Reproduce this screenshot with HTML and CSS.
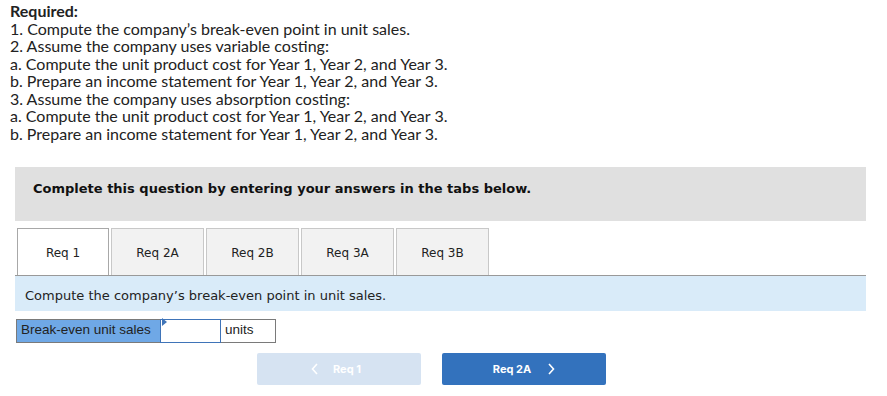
FILE: index.html
```html
<!DOCTYPE html>
<html>
<head>
<meta charset="utf-8">
<link rel="stylesheet" href="styles.css">
</head>
<body>
<div class="required">
  <div class="req-title">Required:</div>
  <div>1. Compute the company’s break-even point in unit sales.</div>
  <div>2. Assume the company uses variable costing:</div>
  <div>a. Compute the unit product cost for Year 1, Year 2, and Year 3.</div>
  <div>b. Prepare an income statement for Year 1, Year 2, and Year 3.</div>
  <div>3. Assume the company uses absorption costing:</div>
  <div>a. Compute the unit product cost for Year 1, Year 2, and Year 3.</div>
  <div>b. Prepare an income statement for Year 1, Year 2, and Year 3.</div>
</div>
<div class="panel">
  <div class="banner">Complete this question by entering your answers in the tabs below.</div>
  <div class="tabs">
    <div class="tab active">Req 1</div>
    <div class="tab">Req 2A</div>
    <div class="tab">Req 2B</div>
    <div class="tab">Req 3A</div>
    <div class="tab">Req 3B</div>
  </div>
  <div class="prompt">Compute the company’s break-even point in unit sales.</div>
  <div class="answer-row">
    <div class="label">Break-even unit sales</div>
    <div class="input"><span class="flag"></span></div>
    <div class="unit">units</div>
  </div>
  <div class="nav">
    <div class="btn disabled"><span class="chev">
      <svg width="8" height="12" viewBox="0 0 8 12"><path d="M6 1 L1.5 6 L6 11" fill="none" stroke="#fff" stroke-width="1.6"/></svg>
    </span><span>Req 1</span></div>
    <div class="btn primary"><span>Req 2A</span><span class="chev">
      <svg width="8" height="12" viewBox="0 0 8 12"><path d="M2 1 L6.5 6 L2 11" fill="none" stroke="#fff" stroke-width="1.6"/></svg>
    </span></div>
  </div>
</div>
</body>
</html>
```
FILE: styles.css
```css
html, body { margin: 0; padding: 0; background: #fff; }
body { padding: 2px 0 0 10px; }
.required {
  font-family: "Lato", "Open Sans", sans-serif;
  font-size: 16px;
  line-height: 17.5px;
  color: #222;
}
.req-title { font-weight: bold; }
.panel { margin: 25px 0 0 5px; width: 851px; }
.banner {
  background: #e0e0e0;
  height: 54px;
  box-sizing: border-box;
  padding: 13px 0 0 18px;
  font-family: "DejaVu Sans", Verdana, sans-serif;
  font-weight: bold;
  font-size: 13px;
  color: #111;
  line-height: 18px;
}
.tabs {
  display: flex;
  gap: 2px;
  margin-top: 7px;
  padding-left: 2px;
  height: 47px;
}
.tab {
  width: 93px;
  box-sizing: border-box;
  border: 1px solid #c8c8c8;
  border-bottom: none;
  background: #f2f2f2;
  font-family: "DejaVu Sans", Verdana, sans-serif;
  font-size: 12px;
  color: #222;
  text-align: center;
  padding-top: 17px;
}
.tab.active { background: #fff; width: 92px; border-color: #a8a8a8; }
.prompt {
  background: #d9ebf9;
  border-top: 1px solid #999;
  height: 36px;
  box-sizing: border-box;
  padding: 12px 0 0 10px;
  font-family: "DejaVu Sans", Verdana, sans-serif;
  font-size: 13px;
  color: #222;
  line-height: 16px;
}
.answer-row { display: flex; margin-top: 8px; height: 24px; margin-left: 1px; }
.answer-row > div { box-sizing: border-box; height: 24px; font-family: "Liberation Sans", Arial, sans-serif; font-size: 13.5px; line-height: 20px; color: #222; }
.label { width: 144px; background: #6fa8e6; border: 1px solid #7a7a7a; border-right: none; padding-left: 4px; }
.input { width: 61px; background: #fff; border: 1px solid #3f74b8; position: relative; }
.flag { position: absolute; left: 1px; top: 0; width: 0; height: 0; border-top: 4px solid transparent; border-bottom: 4px solid transparent; border-left: 5px solid #3f74b8; transform: translateY(-2px); }
.unit { width: 55px; border: 1px solid #7a7a7a; border-left: none; padding-left: 4px; }
.nav { display: flex; gap: 21px; margin: 10px 0 0 242px; }
.btn {
  width: 164px; height: 32px; border-radius: 2px;
  display: flex; align-items: center; justify-content: center; gap: 14px;
  font-family: "Inter", "Roboto", sans-serif; font-weight: bold; font-size: 11px; color: #fff;
}
.btn.disabled { background: #d6e3f2; }
.btn.primary { background: #3372bd; }
.chev { display: flex; align-items: center; }
.btn.disabled .chev { margin-left: -6px; }
.btn.primary .chev { margin-left: 2px; }
```
